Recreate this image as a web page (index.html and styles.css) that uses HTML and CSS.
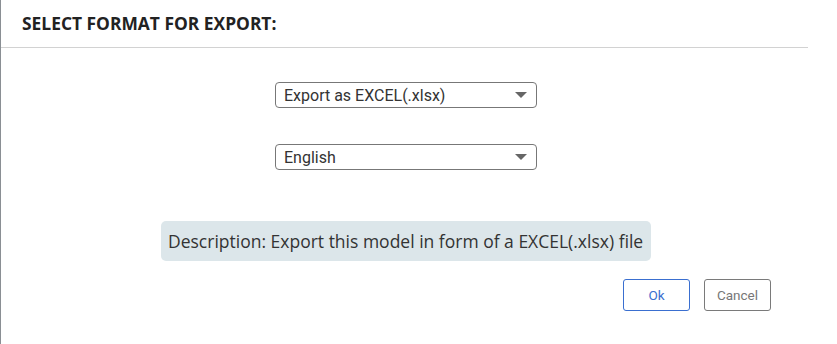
FILE: index.html
```html
<!DOCTYPE html>
<html lang="en">
<head>
    <meta charset="UTF-8">
    <title>Select format for export</title>
    <link rel="stylesheet" href="styles.css">
</head>
<body>

    <div class="dialog">

        <div class="dialog-header">
            <h2>SELECT FORMAT FOR EXPORT:</h2>
        </div>

        <div class="dialog-body">

            <div class="select">
                <span>Export as EXCEL(.xlsx)</span>
                <svg width="12" height="6" viewBox="0 0 12 6"><path d="M0 0 L12 0 L6 6 Z" fill="#666"/></svg>
            </div>

            <div class="select second">
                <span>English</span>
                <svg width="12" height="6" viewBox="0 0 12 6"><path d="M0 0 L12 0 L6 6 Z" fill="#666"/></svg>
            </div>

            <div class="description">Description: Export this model in form of a EXCEL(.xlsx) file</div>

            <div class="actions">
                <button class="btn btn-ok">Ok</button>
                <button class="btn btn-cancel">Cancel</button>
            </div>
        </div>

    </div>

</body>
</html>
```

FILE: styles.css
```css
/* General Styles */
body {
    margin: 0;
    padding: 0;
    background-color: #fff;
    color: #222;
}

.dialog {
    width: 811px;
    height: 344px;
    border-left: 1px solid #8a8f94;
    box-sizing: border-box;
}

.dialog-header {
    height: 47px;
    margin-right: 3px;
    border-bottom: 1px solid #d2d2d2;
    display: flex;
    align-items: center;
    padding-left: 21px;
}

.dialog-header h2 {
    margin: 0;
    padding-bottom: 1px;
    font-family: 'Open Sans', sans-serif;
    font-size: 17.4px;
    font-weight: bold;
    color: #222;
}

.dialog-body {
    display: flex;
    flex-direction: column;
    align-items: center;
    padding-top: 34px;
}

.select {
    width: 262px;
    height: 26px;
    box-sizing: border-box;
    border: 1px solid #777;
    border-radius: 4px;
    display: flex;
    align-items: center;
    justify-content: space-between;
    padding: 0 9px 0 8px;
    font-family: 'Roboto', sans-serif;
    font-size: 16px;
    color: #333;
}

.select.second {
    margin-top: 36px;
}

.description {
    margin-top: 51px;
    width: 490px;
    height: 40px;
    box-sizing: border-box;
    padding: 0 7px;
    display: flex;
    align-items: center;
    background-color: #dce6ea;
    border-radius: 5px;
    font-family: 'Open Sans', sans-serif;
    font-size: 17.5px;
    color: #333;
    white-space: nowrap;
}

.actions {
    align-self: flex-end;
    margin-top: 18px;
    margin-right: 40px;
    display: flex;
    gap: 14px;
}

.btn {
    width: 67px;
    height: 32px;
    background-color: #fff;
    border-radius: 3px;
    font-family: 'Roboto', sans-serif;
    font-size: 13.5px;
    cursor: pointer;
}

.btn-ok {
    border: 1px solid #3a6fd0;
    color: #3a6fd0;
}

.btn-cancel {
    border: 1px solid #7a7a7a;
    color: #777;
}
```
